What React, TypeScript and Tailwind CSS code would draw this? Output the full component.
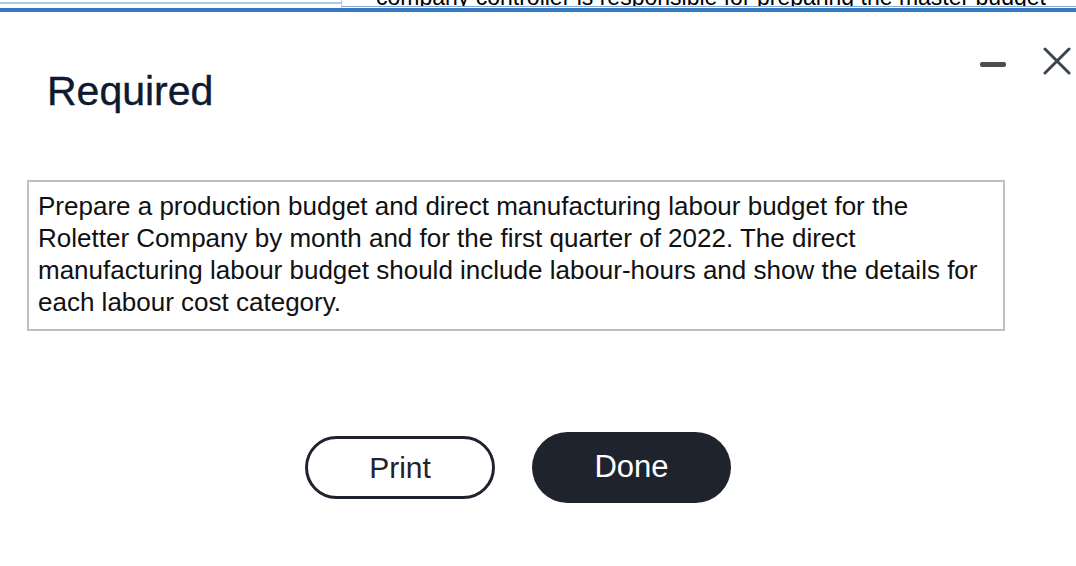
export default function App() {
  return (
    <div className="w-[1076px] h-[566px] overflow-hidden bg-white font-['Liberation_Sans',Arial,sans-serif]">
      {/* clipped strip of the page behind the modal */}
      <div className="relative h-[12px]">
        <div className="flex h-[8px]">
          <div className="w-[341px] pt-[2px]">
            <div className="h-[2px] bg-[#a9c9ea]" />
          </div>
          <div className="w-px bg-[#c8c8c8]" />
          <div className="flex-1 flex flex-col overflow-hidden">
            <div className="h-[6px] overflow-hidden pl-[34px]">
              <div className="mt-[-14px] whitespace-nowrap text-[23px] leading-[23px] text-black">
                company controller is responsible for preparing the master budget
              </div>
            </div>
            <div className="h-px bg-[#7fa9d9]" />
          </div>
        </div>
        <div className="h-[4px] bg-[#3778c2]" />
      </div>

      <div className="flex items-start justify-between pl-[47px] pr-[5px] pt-[35px]">
        <h1 className="mt-[20px] text-[41px] leading-[48px] text-[#0d1a30] [-webkit-text-stroke:0.4px_#0d1a30]">
          Required
        </h1>
        <div className="flex items-start gap-[37px]">
          <div className="mt-[15px] h-[5px] w-[26px] rounded-[2px] bg-[#4d4d4d]" />
          <svg width="28" height="28" viewBox="0 0 28 28" fill="none">
            <path d="M2 2L26 26M26 2L2 26" stroke="#3c4450" strokeWidth="3" strokeLinecap="round" />
          </svg>
        </div>
      </div>

      <div className="ml-[27px] mt-[65px] h-[151px] w-[978px] border-2 border-[#bfbfbf] pl-[9px] pr-[4px] pt-[8px] text-[26px] leading-[32px] text-[#111]">
        Prepare a production budget and direct manufacturing labour budget for the Roletter Company by month and
        for the first quarter of 2022. The direct manufacturing labour budget should include labour-hours and show the
        details for each labour cost category.
      </div>

      <div className="mt-[101px] flex items-center gap-[37px] pl-[305px]">
        <button className="h-[63px] w-[190px] rounded-full border-[3px] border-[#1f232d] bg-white text-[30px] text-[#1f232d]">
          Print
        </button>
        <button className="h-[71px] w-[199px] rounded-full bg-[#1f232e] text-[31px] text-white">Done</button>
      </div>
    </div>
  );
}
